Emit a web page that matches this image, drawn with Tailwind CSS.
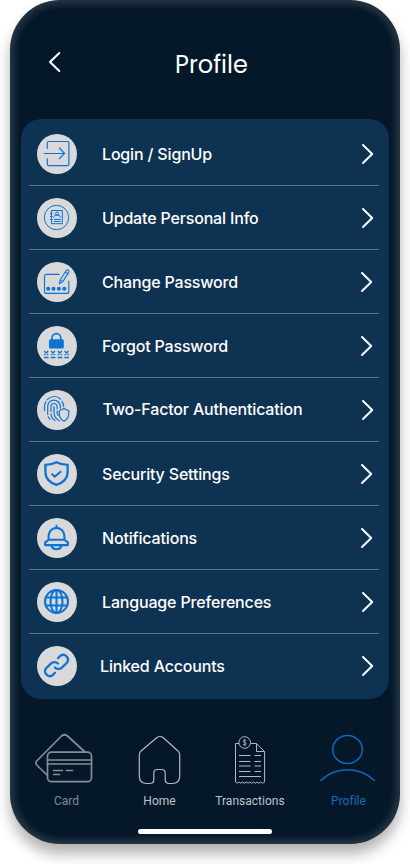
<!DOCTYPE html>
<html lang="en">
<head>
<meta charset="utf-8">
<meta name="viewport" content="width=device-width, initial-scale=1">
<title>Profile</title>
<script src="https://cdn.jsdelivr.net/npm/@tailwindcss/browser@4"></script>
</head>
<body class="bg-white w-[410px] h-[864px] overflow-hidden font-['Inter',sans-serif]">
<main class="mx-[10px] w-[390px] h-[844px] rounded-[50px] bg-[#051829] shadow-[inset_0_0_6px_5px_rgba(255,255,255,0.12),0_10px_14px_rgba(0,0,0,0.3)] flex flex-col">
  <header class="h-[119px] flex items-start pl-[38px]">
    <button class="mt-[51px] w-[14px] h-[22px]" aria-label="Back">
      <svg width="14" height="22" fill="none" stroke="#fff" stroke-width="2" stroke-linecap="round" stroke-linejoin="round"><path d="M11.300 2 2 11l9.300 9"/></svg>
    </button>
    <h1 class="mt-[47px] ml-[113px] text-[24px] leading-9 text-white whitespace-nowrap font-['Poppins','Lato',sans-serif]">Profile</h1>
  </header>

  <ul class="mx-[11px] h-[580px] pt-[3px] rounded-[20px] bg-[#0e3252] text-white text-[16px] font-medium tracking-[-0.17px]">
    <li class="mx-2 w-[350px] h-16 pt-px pl-2 pr-[5px] flex items-center border-b border-[#5a7389]">
      <span class="size-10 rounded-full bg-[#d9d9d9]"><svg width="40" height="40" fill="none" stroke="#0d74d6" stroke-width="1.200" stroke-linecap="round" stroke-linejoin="round"><path d="M10.300 14.500V9q0-1.500 1.500-1.500h18.700q1.400 0 1.400 1.500v21.300q0 1.400-1.400 1.400H11.800q-1.500 0-1.500-1.400v-5.500M7.300 19.500h20M22.500 14l5 5.500-5 5"/></svg></span>
      <span class="ml-[25px] flex-1">Login / SignUp</span>
      <svg width="14" height="22" fill="none" stroke="#fff" stroke-width="2" stroke-linecap="round" stroke-linejoin="round"><path d="M3 2 12.200 11 3 20"/></svg>
    </li>
    <li class="mx-2 w-[350px] h-16 pt-px pl-2 pr-[5px] flex items-center border-b border-[#5a7389]">
      <span class="size-10 rounded-full bg-[#d9d9d9]"><svg width="40" height="40" fill="none" stroke="#0d74d6" stroke-width="1"><circle cx="19.500" cy="19.500" r="12.200"/><path d="M14.500 12.500h10.800v13.200H14.500zM13 15.500h2.500M13 18.500h2.500M13 21.500h2.500M16.800 21.500h6.800M16.800 23.500h6.800M16.800 19.800v-1q.2-1.600 1.800-1.600h2.600q1.800 0 2 1.600v1"/><circle cx="20" cy="15.600" r="1.500"/></svg></span>
      <span class="ml-[25px] flex-1">Update Personal Info</span>
      <svg width="14" height="22" fill="none" stroke="#fff" stroke-width="2" stroke-linecap="round" stroke-linejoin="round"><path d="M3 2 12.200 11 3 20"/></svg>
    </li>
    <li class="mx-2 w-[350px] h-16 pt-px pl-2 pr-[6px] flex items-center border-b border-[#5a7389]">
      <span class="size-10 rounded-full bg-[#d9d9d9]"><svg width="40" height="40" fill="none" stroke="#0d74d6" stroke-width="1.100" stroke-linecap="round" stroke-linejoin="round"><path d="M22 12.400H9.500q-2 0-2 2v15q0 2 2 2h20.300q2 0 2-2V19M22.400 21.800l.7-3.800 6-9.300q1-1.400 2.200-.6 1.300.9.400 2.300l-6 9.200zM28.200 10l2.500 1.800M23.100 18l2.600 1.600"/><g fill="#0d74d6" stroke="none"><circle cx="11.200" cy="26.700" r="2"/><circle cx="16.500" cy="26.700" r="2"/><circle cx="21.900" cy="26.700" r="2"/><circle cx="27.300" cy="26.700" r="2"/></g></svg></span>
      <span class="ml-[25px] flex-1">Change Password</span>
      <svg width="14" height="22" fill="none" stroke="#fff" stroke-width="2" stroke-linecap="round" stroke-linejoin="round"><path d="M3 2 12.200 11 3 20"/></svg>
    </li>
    <li class="mx-2 w-[350px] h-16 pt-px pl-2 pr-[6px] flex items-center border-b border-[#5a7389]">
      <span class="size-10 rounded-full bg-[#d9d9d9]"><svg width="40" height="40" fill="none" stroke="#0d74d6" stroke-width="1.300"><rect x="12" y="13.200" width="14.800" height="9.300" rx="1.500" fill="#0d74d6" stroke="none"/><path d="M15 14v-2a4.400 4.400 0 0 1 8.800 0v2" stroke-width="1.600"/><path d="M7.200 25l4 4m0-4-4 4M14 25l4 4m0-4-4 4M20.800 25l4 4m0-4-4 4M27.600 25l4 4m0-4-4 4M7 31.500h4.600M13.800 31.500h4.600M20.600 31.500h4.600M27.400 31.500H32"/></svg></span>
      <span class="ml-[25px] flex-1">Forgot Password</span>
      <svg width="14" height="22" fill="none" stroke="#fff" stroke-width="2" stroke-linecap="round" stroke-linejoin="round"><path d="M3 2 12.200 11 3 20"/></svg>
    </li>
    <li class="mx-2 w-[350px] h-16 pt-px pl-2 pr-[5px] flex items-center border-b border-[#5a7389]">
      <span class="size-10 rounded-full bg-[#d9d9d9]"><svg width="40" height="40" fill="none" stroke="#0d74d6" stroke-width="1.200" stroke-linecap="round" stroke-linejoin="round"><path d="M7.500 20.500v-4A9.800 9.800 0 0 1 9 11.500M10.200 9.600c3.700-4 10-4 13.200-.6M10.700 24.500v-7.800c0-4 2.800-6.500 6-6.500 3.800 0 6.700 2.700 6.700 6.500v1.500M25 11.300q1.600 2.300 1.600 5M11.200 26.800q.7 1.500 1.800 2.400M14 21.500v-5q.2-3 3-3 3 0 3.100 3.200v2M14 24q.2 4 4 6.400M17 16.500v6.300q.2 5.500 5.600 8M20.100 21v1.500q.2 1.500 1 3"/><path d="M27 18.300q2.200 1.900 4.700 2.200v3.400q0 4.700-4.700 7.300-4.700-2.600-4.700-7.300v-3.400q2.500-.3 4.700-2.200z"/></svg></span>
      <span class="ml-[25.500px] -mt-0.5 flex-1">Two-Factor Authentication</span>
      <svg width="14" height="22" fill="none" stroke="#fff" stroke-width="2" stroke-linecap="round" stroke-linejoin="round"><path d="M3 2 12.200 11 3 20"/></svg>
    </li>
    <li class="mx-2 w-[350px] h-16 pt-px pl-2 pr-[6px] flex items-center border-b border-[#5a7389]">
      <span class="size-10 rounded-full bg-[#d9d9d9]"><svg width="40" height="40" fill="none" stroke="#0d74d6" stroke-width="2.300"><path d="M19.500 8.200q4.500 2.500 11.100 2.600v7.400q0 8.800-11.100 12.700-11.100-3.900-11.100-12.700v-7.400q6.600-.1 11.100-2.600z"/><path d="m14.600 19.800 3.200 2.800 6.400-5.400" stroke-width="2"/></svg></span>
      <span class="ml-[25px] flex-1">Security Settings</span>
      <svg width="14" height="22" fill="none" stroke="#fff" stroke-width="2" stroke-linecap="round" stroke-linejoin="round"><path d="M3 2 12.200 11 3 20"/></svg>
    </li>
    <li class="mx-2 w-[350px] h-16 pt-px pl-2 pr-[6px] flex items-center border-b border-[#5a7389]">
      <span class="size-10 rounded-full bg-[#d9d9d9]"><svg width="40" height="40" fill="none" stroke="#0d74d6" stroke-width="2.100" stroke-linecap="round" stroke-linejoin="round"><path d="M19.500 7.800v2M11.600 21.500v-3.700a7.900 7.900 0 0 1 15.800 0v3.700M11.600 21.800h15.800l3.500 2.500v2.800H8.100v-2.800zM14.500 28q1.300 3.200 5 3.200t5-3.200"/></svg></span>
      <span class="ml-[25px] flex-1">Notifications</span>
      <svg width="14" height="22" fill="none" stroke="#fff" stroke-width="2" stroke-linecap="round" stroke-linejoin="round"><path d="M3 2 12.200 11 3 20"/></svg>
    </li>
    <li class="mx-2 w-[350px] h-16 pt-px pl-2 pr-[5px] flex items-center border-b border-[#5a7389]">
      <span class="size-10 rounded-full bg-[#d9d9d9]"><svg width="40" height="40" fill="none" stroke="#0d74d6" stroke-width="2.100"><circle cx="19.500" cy="19.500" r="11.500"/><ellipse cx="19.500" cy="19.500" rx="6" ry="11.500"/><path d="M19.500 8v23M8.500 15.500h22M8.500 23.500h22"/></svg></span>
      <span class="ml-[25px] flex-1">Language Preferences</span>
      <svg width="14" height="22" fill="none" stroke="#fff" stroke-width="2" stroke-linecap="round" stroke-linejoin="round"><path d="M3 2 12.200 11 3 20"/></svg>
    </li>
    <li class="mx-2 w-[350px] h-16 pl-2 pr-[5px] flex items-center">
      <span class="size-10 rounded-full bg-[#d9d9d9]"><svg width="40" height="40" fill="none" stroke="#0d74d6" stroke-width="2.300" stroke-linecap="round" stroke-linejoin="round"><path d="M21 12.200l2.400-2.400a4.800 4.800 0 0 1 6.500 6.900l-4.800 4.700a4.800 4.800 0 0 1-7.100 0M18 26.800l-2.400 2.400a4.800 4.800 0 0 1-6.500-6.900l4.800-4.700a4.800 4.800 0 0 1 7.100 0"/></svg></span>
      <span class="ml-[23px] flex-1">Linked Accounts</span>
      <svg width="14" height="22" fill="none" stroke="#fff" stroke-width="2" stroke-linecap="round" stroke-linejoin="round"><path d="M3 2 12.200 11 3 20"/></svg>
    </li>
  </ul>

  <nav class="mt-[31px] h-[78px] pl-[24px] flex text-[12px] leading-[14px] tracking-[0.02px] font-['Roboto',sans-serif]">
    <a class="w-[60px] flex flex-col items-center text-[#808b94]">
      <svg class="shrink-0" width="60" height="60" fill="none" stroke="#848e96" stroke-width="1.700" stroke-linecap="round" stroke-linejoin="round"><rect x="13.500" y="22.200" width="44" height="29.500" rx="4"/><path d="M13.500 30h44M13.500 34h44M19.500 40.500h9M32.500 40.500h6M19.500 44.500h6M13.500 45.500 2.700 35q-1.700-2 0-4L27.500 6q3-2.500 6 0l17.500 16"/></svg>
      <span class="mt-[4px] ml-[5px]">Card</span>
    </a>
    <a class="w-[60px] ml-[36px] flex flex-col items-center text-[#bec4c9]">
      <svg class="shrink-0" width="60" height="60" fill="none" stroke="#b4babf" stroke-width="1.200" stroke-linejoin="round"><path d="M27 7.500q3-2 6 0l15 13.500q1.700 1.500 1.700 4V46q0 7.500-7.500 7.500h-3q-4 0-4-4V43q0-3.500-3.500-3.500h-4.400q-3.500 0-3.500 3.500v6.500q0 4-4 4h-3q-7.500 0-7.500-7.500V25q0-2.500 1.700-4z"/></svg>
      <span class="mt-[4px] -ml-px">Home</span>
    </a>
    <a class="w-[76px] ml-[22px] flex flex-col items-center text-[#bec4c9]">
      <svg class="shrink-0" width="60" height="60" fill="none" stroke="#b4babf" stroke-width="1"><path d="M19 13.500h-3.500V52q1.800 2.500 3.600 0 1.800 2.500 3.600 0 1.800 2.500 3.600 0 1.800 2.500 3.600 0 1.800 2.500 3.600 0 1.800 2.500 3.600 0 1.800 2.500 3.600 0 1.800 2.500 3.900 0V21.500l-8.300-8H31M36.500 13.500v8h8M19 25.500h11.500M34.500 25.500h6.500M19 31.500h11.500M34.500 31.500h6.500M19 36h11.500M34.500 36h6.500M19 41.500h11.500M34.500 41.500h6.500M19 46.500h22"/><circle cx="24.700" cy="12.500" r="5.800"/><path d="M26.200 10.800q-.3-.8-1.500-.8t-1.500 1.100q0 .9 1.500 1.300t1.500 1.500q0 1.100-1.500 1.100t-1.500-1M24.700 9v7.200" stroke-width=".8"/></svg>
      <span class="mt-[4px]">Transactions</span>
    </a>
    <a class="w-[60px] ml-[30px] flex flex-col items-center text-[#1769bd]">
      <svg class="shrink-0" width="60" height="60" fill="none" stroke="#1266bb" stroke-width="1.500" stroke-linecap="round"><ellipse cx="29.500" cy="19.500" rx="14.800" ry="14"/><path d="M2.700 50.500Q14 39.700 29.500 39.700T56.500 50.500"/></svg>
      <span class="mt-[4px] ml-[1px]">Profile</span>
    </a>
  </nav>
  <div class="mt-[21px] ml-[128px] w-[134px] h-[5px] rounded-full bg-white"></div>
</main>
</body>
</html>
